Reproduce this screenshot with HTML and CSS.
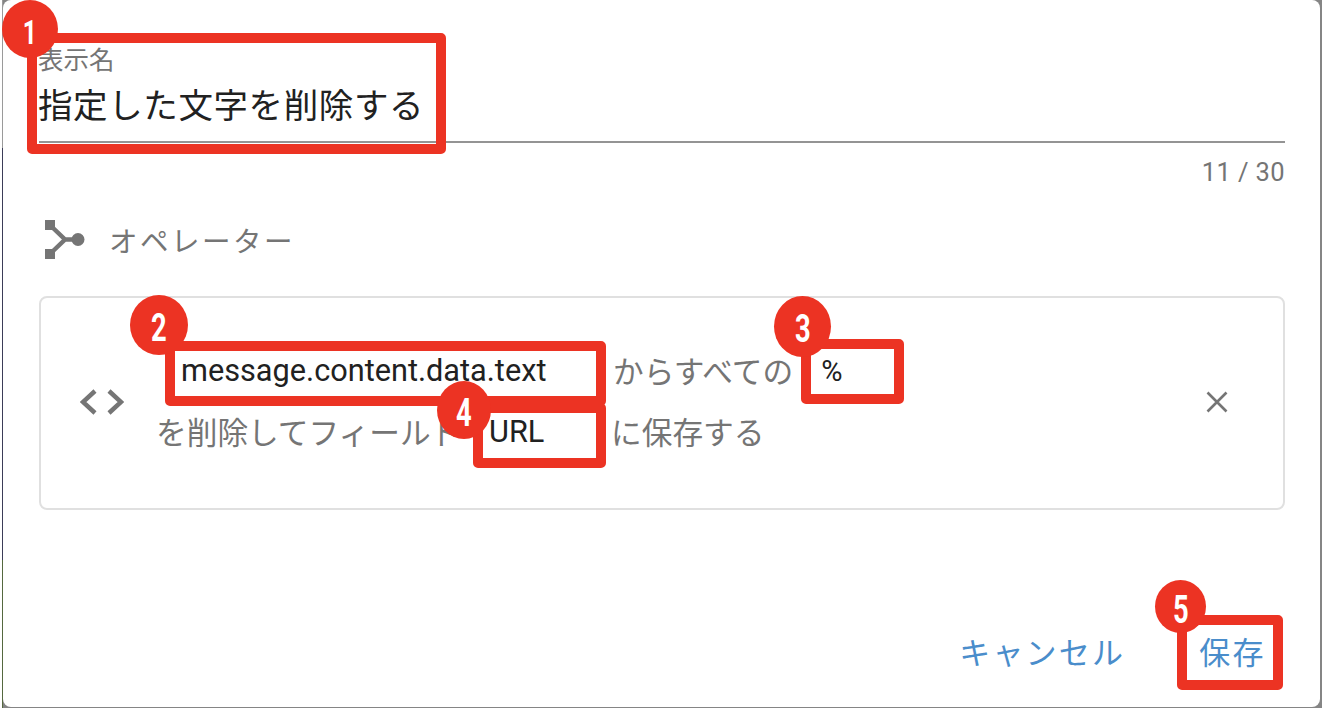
FILE: index.html
```html
<!DOCTYPE html>
<html lang="ja">
<head>
    <meta charset="UTF-8">
    <title>オペレーター</title>
    <link rel="stylesheet" href="styles.css">
</head>
<body>
    <div class="frame">
        <div class="dialog">
            <div class="name-field">
                <div class="name-label">表示名</div>
                <div class="name-value">指定した文字を削除する</div>
            </div>
            <div class="counter">11 / 30</div>

            <div class="section-title">
                <svg class="operator-icon" viewBox="0 0 40 41">
                    <rect x="0" y="1" width="10" height="10" fill="#757575"/>
                    <rect x="0" y="30" width="10" height="10" fill="#757575"/>
                    <path d="M7 8 L20 20.5 L7 33 M20 20.5 H32" fill="none" stroke="#757575" stroke-width="4.5"/>
                    <circle cx="33" cy="20.5" r="6.5" fill="#757575"/>
                </svg>
                <span>オペレーター</span>
            </div>

            <div class="operator-card">
                <svg class="code-icon" viewBox="0 0 44 26">
                    <path d="M15 2 L3 13 L15 24 M29 2 L41 13 L29 24" fill="none" stroke="#757575" stroke-width="4.5"/>
                </svg>
                <div class="rule">
                    <div class="rule-row">
                        <span class="value value-source">message.content.data.text</span>
                        <span class="rule-text">からすべての</span>
                        <span class="value value-char">%</span>
                    </div>
                    <div class="rule-row">
                        <span class="rule-text rule-text-start">を削除してフィールド</span>
                        <span class="value value-target">URL</span>
                        <span class="rule-text">に保存する</span>
                    </div>
                </div>
                <svg class="close-icon" viewBox="0 0 22 22">
                    <path d="M1.5 1.5 L20.5 20.5 M20.5 1.5 L1.5 20.5" fill="none" stroke="#757575" stroke-width="2.6"/>
                </svg>
            </div>

            <div class="actions">
                <button class="action action-cancel">キャンセル</button>
                <button class="action action-save">保存</button>
            </div>
        </div>
    </div>

    <!-- annotations on top of the screenshot -->
    <div class="mark mark-1"></div>
    <div class="mark mark-2"></div>
    <div class="mark mark-3"></div>
    <div class="mark mark-4"></div>
    <div class="mark mark-5"></div>
    <div class="badge badge-1"><span>1</span></div>
    <div class="badge badge-2"><span>2</span></div>
    <div class="badge badge-3"><span>3</span></div>
    <div class="badge badge-4"><span>4</span></div>
    <div class="badge badge-5"><span>5</span></div>
</body>
</html>
```

FILE: styles.css
```css
html, body {
    height: 100%;
}
body {
    margin: 0;
    overflow: hidden;
    position: relative;
    font-family: Roboto, "Noto Sans CJK JP", sans-serif;
    background: #fff;
    padding-left: 2px;
    box-sizing: border-box;
}
/* the thin strip of the page behind the dialog */
.frame {
    height: 708px;
    padding: 0 2px 1px 1px;
    box-sizing: border-box;
    background:
        linear-gradient(#9a9a9a 0, #9a9a9a 148px, #3b3d58 148px, #3b3d58 560px, #55683f 560px) left top / 1px 100% no-repeat,
        #858585;
}
.dialog {
    height: 707px;
    box-sizing: border-box;
    background: #fff;
    border-radius: 8px;
    padding: 42px 35px 0 36px;
    display: flex;
    flex-direction: column;
}
.name-field {
    height: 101px;
    border-bottom: 2px solid #949494;
    box-sizing: border-box;
}
.name-label {
    margin-left: -1px;
    font-size: 25.5px;
    line-height: 37px;
    color: #757575;
}
.name-value {
    margin-left: -1px;
    margin-top: 2px;
    font-size: 34.5px;
    line-height: 50px;
    letter-spacing: 0.6px;
    color: #212121;
}
.counter {
    margin-top: 14px;
    text-align: right;
    font-size: 25.5px;
    line-height: 30px;
    letter-spacing: 0.4px;
    color: #757575;
}
.section-title {
    margin-top: 31px;
    height: 42px;
    display: flex;
    align-items: center;
    padding-left: 6px;
    font-size: 28.5px;
    letter-spacing: 2.5px;
    color: #757575;
}
.operator-icon {
    width: 40px;
    height: 41px;
    margin-right: 24px;
}
.operator-card {
    margin-top: 36px;
    height: 214px;
    box-sizing: border-box;
    border: 2px solid #e0e0e0;
    border-radius: 8px;
    display: flex;
    align-items: center;
    padding-left: 39px;
}
.code-icon {
    width: 44px;
    height: 26px;
    flex: none;
    margin-right: 32px;
    margin-bottom: 2px;
}
.rule {
    width: 1050px;
    flex: none;
    margin-bottom: 4px;
}
.rule-row {
    display: flex;
    height: 61px;
    align-items: center;
}
.rule-text {
    font-size: 30.7px;
    color: #757575;
    white-space: nowrap;
    margin-bottom: 2px;
}
.rule-text-start {
    width: 333px;
    flex: none;
}
.value {
    font-size: 30.7px;
    color: #212121;
    white-space: nowrap;
    flex: none;
}
.value-source {
    margin-left: 25px;
    width: 432px;
}
.value-char {
    font-size: 29px;
    margin-left: 28px;
}
.value-target {
    width: 122px;
}
.close-icon {
    width: 22px;
    height: 22px;
    flex: none;
    margin-bottom: 2px;
}
.actions {
    margin-top: auto;
    height: 110px;
    display: flex;
    justify-content: flex-end;
    padding-top: 29px;
    box-sizing: border-box;
    padding-right: 19px;
}
.action {
    border: 0;
    background: none;
    padding: 0;
    height: 48px;
    font-family: inherit;
    font-size: 31px;
    letter-spacing: 2.2px;
    color: #4a8dcb;
}
.action-save {
    margin-left: 74px;
    letter-spacing: 2.4px;
}

/* red boxes */
.mark {
    position: absolute;
    border: 10px solid #ec3323;
    border-radius: 5px;
    box-sizing: border-box;
}
.mark-1 { left: 27px; top: 33px; width: 419px; height: 121px; }
.mark-2 { left: 165px; top: 341px; width: 441px; height: 65px; }
.mark-3 { left: 801px; top: 339px; width: 103px; height: 65px; }
.mark-4 { left: 473px; top: 403px; width: 133px; height: 65px; }
.mark-5 { left: 1177px; top: 615px; width: 106px; height: 75px; }

/* numbered badges */
.badge {
    position: absolute;
    background: #ec3323;
    border-radius: 50%;
    color: #fff;
    display: flex;
    align-items: center;
    justify-content: center;
    font-weight: 700;
    font-size: 38px;
    line-height: 1;
    padding-top: 5px;
    box-sizing: border-box;
}
.badge span {
    transform: scaleX(0.72);
}
.badge-1 { left: 2px; top: 0; width: 56px; height: 58px; font-size: 34px; }
.badge-2 { left: 130px; top: 295px; width: 58px; height: 60px; }
.badge-3 { left: 774px; top: 296px; width: 57px; height: 61px; }
.badge-4 { left: 437px; top: 381px; width: 54px; height: 58px; }
.badge-5 { left: 1155px; top: 580px; width: 51px; height: 53px; padding-top: 7px; }
```
